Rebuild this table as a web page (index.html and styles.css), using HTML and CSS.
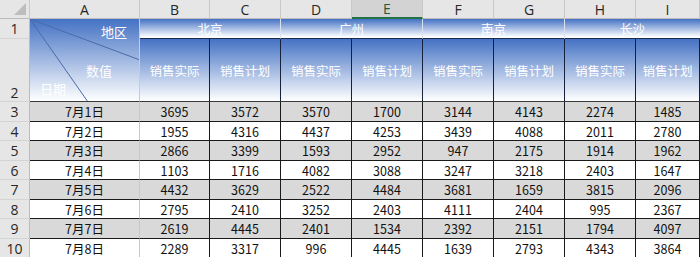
FILE: index.html
```html
<!DOCTYPE html>
<html lang="zh-CN">
<head>
<meta charset="utf-8">
<title>销售数据</title>
<link rel="stylesheet" href="styles.css">
</head>
<body>
<table class="sheet">
  <colgroup>
    <col class="w-rh"><col class="w-a"><col class="w-b"><col class="w-n"><col class="w-n"><col class="w-n"><col class="w-n"><col class="w-n"><col class="w-n"><col class="w-i">
  </colgroup>
  <thead>
    <tr class="colhead">
      <th class="corner"><span class="tri"></span></th>
      <th>A</th><th>B</th><th>C</th><th>D</th><th class="sel">E</th><th>F</th><th>G</th><th>H</th><th>I</th>
    </tr>
  </thead>
  <tbody>
    <tr class="r1">
      <th class="rh">1</th>
      <td rowspan="2" class="diag">
        <svg class="diag-lines" viewBox="0 0 110 83" preserveAspectRatio="none"><line x1="0" y1="0" x2="110" y2="41"/><line x1="0" y1="0" x2="58" y2="83"/></svg>
        <div class="diag-labels">
          <span class="lb-area">地区</span>
          <span class="lb-val">数值</span>
          <span class="lb-date">日期</span>
        </div>
      </td>
      <td colspan="2" class="band">北京</td>
      <td colspan="2" class="band">广州</td>
      <td colspan="2" class="band">南京</td>
      <td colspan="2" class="band last">长沙</td>
    </tr>
    <tr class="r2">
      <th class="rh rh2">2</th>
      <td class="sub">销售实际</td><td class="sub">销售计划</td>
      <td class="sub">销售实际</td><td class="sub">销售计划</td>
      <td class="sub">销售实际</td><td class="sub">销售计划</td>
      <td class="sub">销售实际</td><td class="sub">销售计划</td>
    </tr>
    <tr class="row odd"><th class="rh">3</th><td class="date">7月1日</td><td>3695</td><td>3572</td><td>3570</td><td>1700</td><td>3144</td><td>4143</td><td>2274</td><td>1485</td></tr>
    <tr class="row"><th class="rh">4</th><td class="date">7月2日</td><td>1955</td><td>4316</td><td>4437</td><td>4253</td><td>3439</td><td>4088</td><td>2011</td><td>2780</td></tr>
    <tr class="row odd"><th class="rh">5</th><td class="date">7月3日</td><td>2866</td><td>3399</td><td>1593</td><td>2952</td><td>947</td><td>2175</td><td>1914</td><td>1962</td></tr>
    <tr class="row"><th class="rh">6</th><td class="date">7月4日</td><td>1103</td><td>1716</td><td>4082</td><td>3088</td><td>3247</td><td>3218</td><td>2403</td><td>1647</td></tr>
    <tr class="row odd"><th class="rh">7</th><td class="date">7月5日</td><td>4432</td><td>3629</td><td>2522</td><td>4484</td><td>3681</td><td>1659</td><td>3815</td><td>2096</td></tr>
    <tr class="row"><th class="rh">8</th><td class="date">7月6日</td><td>2795</td><td>2410</td><td>3252</td><td>2403</td><td>4111</td><td>2404</td><td>995</td><td>2367</td></tr>
    <tr class="row odd"><th class="rh">9</th><td class="date">7月7日</td><td>2619</td><td>4445</td><td>2401</td><td>1534</td><td>2392</td><td>2151</td><td>1794</td><td>4097</td></tr>
    <tr class="row last-row"><th class="rh">10</th><td class="date">7月8日</td><td>2289</td><td>3317</td><td>996</td><td>4445</td><td>1639</td><td>2793</td><td>4343</td><td>3864</td></tr>
  </tbody>
</table>
</body>
</html>
```

FILE: styles.css
```css
html, body {
  margin: 0;
  padding: 0;
  background: #fff;
  overflow: hidden;
}
body {
  font-family: "Noto Sans CJK SC", "Noto Sans", sans-serif;
  font-size: 12.5px;
  color: #000;
}
.sheet {
  table-layout: fixed;
  border-collapse: separate;
  border-spacing: 0;
  width: 700px;
}
.w-rh { width: 30px; }
.w-a { width: 110px; }
.w-b { width: 70px; }
.w-n { width: 71px; }
.w-i { width: 64px; }

.sheet th, .sheet td {
  padding: 0;
  box-sizing: border-box;
  overflow: hidden;
  white-space: nowrap;
  text-align: center;
}

/* column letters */
.colhead th {
  height: 19px;
  background: #e6e6e6;
  border-right: 1px solid #c9c9c9;
  border-bottom: 1px solid #bcbcbc;
  font-family: "Open Sans", "Noto Sans", sans-serif;
  font-weight: normal;
  font-size: 14px;
  color: #262626;
  line-height: 17px;
}
.colhead th.sel {
  background: #d3d3d3;
  color: #1f5a3a;
  border-bottom: 2px solid #217346;
}
.colhead th.corner {
  position: relative;
  border-right: 1px solid #c9c9c9;
}
.tri {
  position: absolute;
  right: 3px;
  bottom: 3px;
  width: 0;
  height: 0;
  border-style: solid;
  border-width: 0 0 12px 12px;
  border-color: transparent transparent #bdbdbd transparent;
}

/* row numbers */
.rh {
  background: #e6e6e6;
  border-right: 1px solid #bcbcbc;
  border-bottom: 1px solid #d4d4d4;
  font-family: "Open Sans", "Noto Sans", sans-serif;
  font-weight: normal;
  font-size: 14px;
  color: #262626;
  line-height: 17px;
}
.rh2 {
  vertical-align: bottom;
  padding-bottom: 1px;
}

/* header rows */
.r1 { height: 20px; }
.r2 { height: 63px; }

.band {
  background: linear-gradient(#4472c4, #ffffff 95%);
  color: #fff;
  font-size: 12.5px;
  border-bottom: 1px solid #1c2a4e;
  border-right: 1px solid #d9e0ee;
  vertical-align: middle;
  line-height: 18px;
}
.band.last { border-right: none; }

.sub {
  background: linear-gradient(#4472c4, #ffffff);
  color: #fff;
  font-size: 12.5px;
  border-right: 1px solid #16213d;
  border-bottom: 1px solid #3a3a3a;
}

.diag {
  position: relative;
  background: linear-gradient(#4472c4, #ffffff);
  border-right: 1px solid #c6cbd6;
  border-bottom: 1px solid #3a3a3a;
  vertical-align: top;
  color: #fff;
  font-size: 13px;
}
.diag-lines {
  position: absolute;
  left: 0;
  top: 0;
  width: 110px;
  height: 83px;
}
.diag-lines line {
  stroke: #4b6aa8;
  stroke-width: 1;
}
.diag-labels {
  display: flex;
  flex-direction: column;
  height: 82px;
  padding: 4px 12px 0 10px;
  box-sizing: border-box;
}
.lb-area { align-self: flex-end; line-height: 18px; }
.lb-val { align-self: flex-end; margin-right: 15px; margin-top: 21px; line-height: 18px; }
.lb-date { align-self: flex-start; line-height: 18px; }

/* data rows */
.row { height: 19px; }
.row.odd, .row.last-row { height: 20px; }
.row td {
  border-right: 1px solid #1a1a1a;
  border-bottom: 1px solid #1a1a1a;
  line-height: 17px;
  color: #111;
}
.row td.date { border-right: 1px solid #c8c8c8; }
.row.odd td { background: #d9d9d9; }
```
